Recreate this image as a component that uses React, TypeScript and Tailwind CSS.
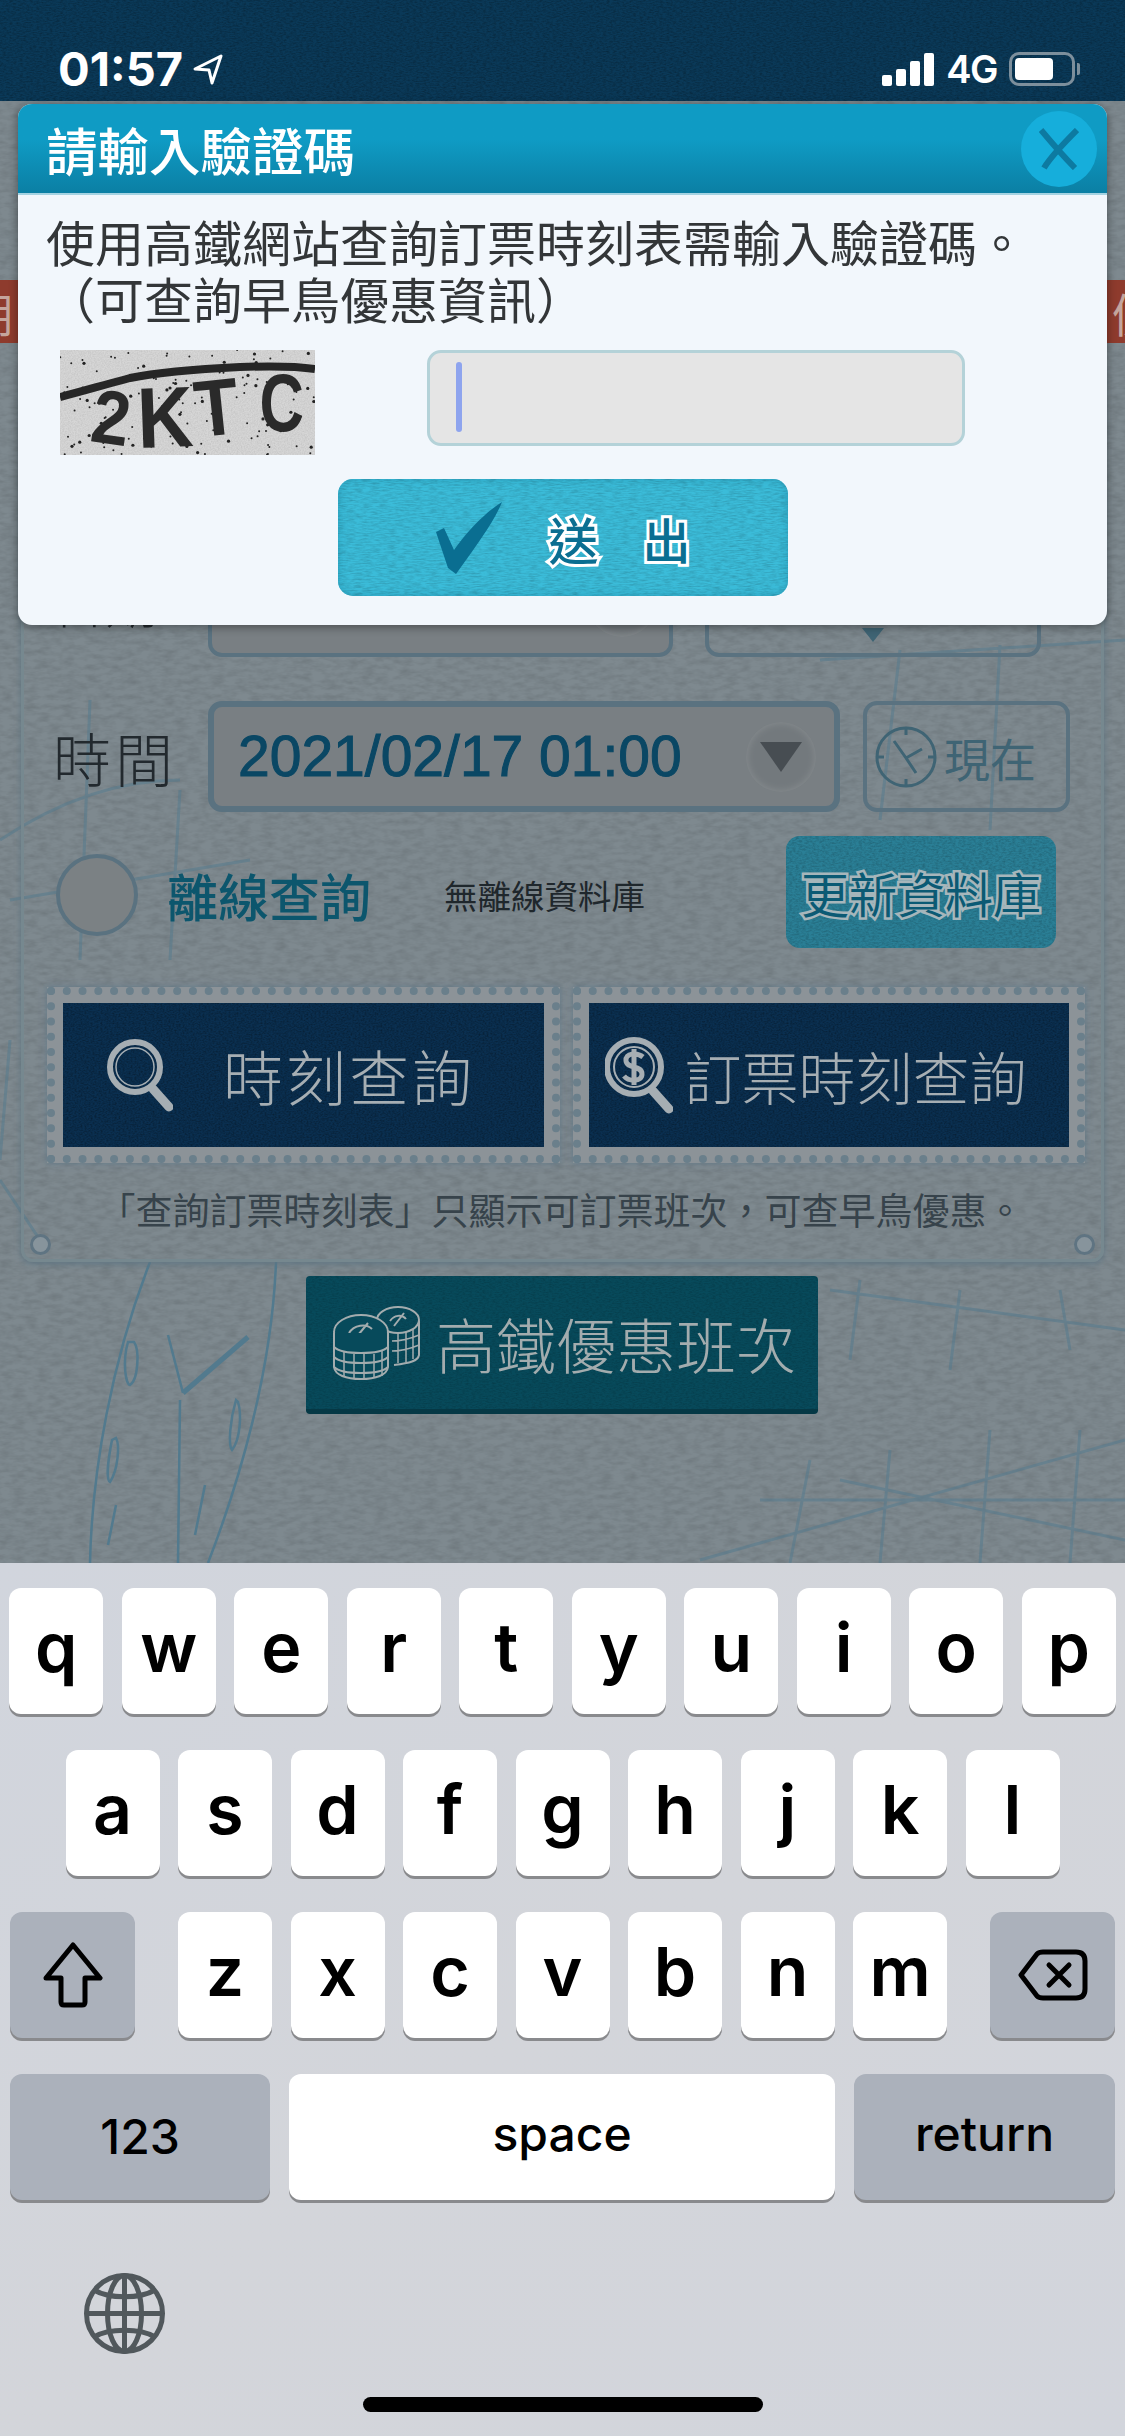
import type { ReactNode } from 'react';

const cjk = "font-['Noto_Sans_CJK_TC','Noto_Sans',sans-serif]";

// woven paper grain, tinted per surface
function Grain({ id, freq, alpha }: { id: string; freq: string; alpha: number }) {
  return (
    <svg className="absolute inset-0 w-full h-full pointer-events-none" aria-hidden="true">
      <filter id={id} x="0" y="0" width="100%" height="100%">
        <feTurbulence type="fractalNoise" baseFrequency={freq} numOctaves={3} seed={4} />
        <feColorMatrix values={`0 0 0 0 0  0 0 0 0 0  0 0 0 0 0  ${alpha} 0 0 0 ${-alpha * 0.35}`} />
      </filter>
      <rect width="100%" height="100%" filter={`url(#${id})`} />
    </svg>
  );
}

function BackgroundSketch() {
  return (
    <svg className="absolute inset-0 w-full h-full" viewBox="0 0 1125 1563" fill="none" stroke="#527a8e" aria-hidden="true">
      {/* clock */}
      <g strokeWidth="2.5">
        <path d="M90 1563C92 1470 112 1360 150 1262" />
        <path d="M208 1563C240 1480 272 1370 276 1262" />
        <path d="M183 1393L168 1335" />
        <path d="M183 1393L248 1337" strokeWidth="5" />
        <path d="M180 1400L178 1563" />
        <path d="M128 1342C122 1362 126 1385 130 1385C138 1380 140 1350 134 1342Z" />
        <path d="M112 1440C108 1460 106 1480 110 1482C118 1470 120 1445 116 1438Z" />
        <path d="M236 1400C230 1420 228 1445 232 1450C240 1440 242 1415 238 1402Z" />
        <path d="M116 1505L108 1545M205 1485L195 1535" />
      </g>
      {/* timetable scribbles */}
      <g strokeWidth="3" opacity="0.5">
        <path d="M830 1290L1125 1330M860 1280L850 1360M960 1290L950 1370M1060 1290L1070 1350" />
        <path d="M700 1560L1125 1440M790 1563L810 1460M880 1563L890 1450M980 1563L990 1430M1070 1563L1080 1430" />
        <path d="M760 1500L1125 1500M840 1480L1125 1540" />
        <path d="M0 840C60 800 120 780 180 780M10 900L250 860M90 700L80 960M180 790L170 960" />
        <path d="M820 660L1125 640M900 650L880 820M1000 645L990 830" />
        <path d="M0 1180L40 1240M10 1040L0 1160" />
      </g>
    </svg>
  );
}

function Dropdown() {
  return (
    <span className="w-[70px] h-[70px] rounded-full bg-[#73797d] shadow-[inset_0_0_8px_#8b9093] flex items-center justify-center shrink-0">
      <svg width="42" height="30" viewBox="0 0 42 30" aria-hidden="true">
        <path d="M0 0H42L21 30Z" fill="#474d52" />
      </svg>
    </span>
  );
}

function ClockIcon() {
  return (
    <svg width="64" height="64" viewBox="0 0 64 64" fill="none" stroke="#3f6474" strokeWidth="3" aria-hidden="true">
      <circle cx="32" cy="32" r="29" />
      <path d="M32 33L20 16M32 33L48 24M32 33L42 48" />
      <path d="M32 3V10M32 54V61M3 32H10M54 32H61" />
    </svg>
  );
}

function SearchIcon() {
  return (
    <svg className="translate-y-[12px]" width="66" height="116" viewBox="0 0 66 116" fill="none" stroke="#a6aeb3" aria-hidden="true">
      <circle cx="28" cy="38" r="25" strokeWidth="6" />
      <circle cx="28" cy="38" r="19" strokeWidth="1.5" />
      <path d="M46 60L62 78" strokeWidth="9" strokeLinecap="round" />
    </svg>
  );
}

function DollarSearchIcon() {
  return (
    <svg className="translate-y-[12px]" width="68" height="116" viewBox="0 0 68 116" fill="none" stroke="#a6aeb3" aria-hidden="true">
      <circle cx="29" cy="38" r="27" strokeWidth="6" />
      <circle cx="29" cy="38" r="20" strokeWidth="2" />
      <path d="M38 28C32 23 20 24 21 32C22 40 37 36 37 45C37 53 24 53 19 47M29 20V56" strokeWidth="5" />
      <path d="M48 62L64 80" strokeWidth="9" strokeLinecap="round" />
    </svg>
  );
}

function CoinsIcon() {
  return (
    <svg width="90" height="76" viewBox="0 0 90 76" fill="none" stroke="#a3acae" strokeWidth="2" aria-hidden="true">
      <ellipse cx="66" cy="15" rx="21" ry="13" />
      <path d="M58 16C62 10 70 9 74 14M62 21L72 8" />
      <path d="M87 16V50C86 56 78 58 62 60" />
      <path d="M66 28V58M74 27V57M81 24V54M60 36C70 36 80 33 87 30M60 46C70 46 80 43 87 40" strokeWidth="1.5" />
      <ellipse cx="29" cy="27" rx="27" ry="17" fill="#074a5b" />
      <path d="M17 28C22 20 34 18 40 24M22 35L36 18" />
      <path d="M2 28V62C3 70 14 74 29 74C44 74 55 70 56 62V28" fill="#074a5b" />
      <path d="M2 42C10 50 48 50 56 42M2 52C10 60 48 60 56 52M2 62C10 70 48 70 56 62" />
      <path d="M12 47V71M22 49V74M32 49V74M42 49V73M50 46V71" strokeWidth="1.5" />
    </svg>
  );
}

function Stamp({ id, icon, inset, children }: { id: string; icon: ReactNode; inset: string; children: ReactNode }) {
  return (
    <div className="flex-1 h-[176px] bg-[#8c9398] border-[8px] border-dotted border-[#6a7f8b] p-[8px] shadow-[0_0_6px_#62798a]">
      <div className={`relative overflow-hidden h-full bg-[#0a2f50] flex items-center ${inset}`}>
        <Grain id={id} freq="0.5 0.7" alpha={0.6} />
        <span className="relative shrink-0">{icon}</span>
        {children}
      </div>
    </div>
  );
}

function StatusBar() {
  return (
    <div className="relative h-[101px] bg-[#0a3958] overflow-hidden flex items-start justify-between pl-[58px] pr-[45px] pt-[46px]">
      <Grain id="top" freq="0.3 0.8" alpha={0.5} />
      <div className="relative flex items-center gap-[10px] text-white">
        <span className="font-['Inter',sans-serif] font-bold text-[47px] leading-[46px]">01:57</span>
        <svg width="30" height="31" viewBox="0 0 30 31" fill="none" stroke="#fff" strokeWidth="3" strokeLinejoin="round" aria-hidden="true">
          <path d="M2 15L28 2L19 29L16 16Z" />
        </svg>
      </div>
      <div className="relative flex items-center gap-[12px] text-white">
        <div className="flex items-end gap-[4px] h-[33px]">
          <span className="w-[10px] h-[11px] bg-white rounded-[2px]" />
          <span className="w-[10px] h-[17px] bg-white rounded-[2px]" />
          <span className="w-[10px] h-[25px] bg-white rounded-[2px]" />
          <span className="w-[10px] h-[33px] bg-white rounded-[2px]" />
        </div>
        <span className="font-['Inter',sans-serif] font-semibold text-[38px] leading-[46px] tracking-[-1.5px]">4G</span>
        <div className="flex items-center gap-[2px]">
          <div className="w-[66px] h-[34px] rounded-[10px] border-[3px] border-[#7d8f9c] p-[3px]">
            <div className="w-[38px] h-full bg-white rounded-[4px]" />
          </div>
          <span className="w-[3px] h-[12px] bg-[#7d8f9c] rounded-r-[2px]" />
        </div>
      </div>
    </div>
  );
}

function Backdrop() {
  return (
    <div className="relative h-[1563px] bg-[#7e898f] overflow-hidden">
      <Grain id="paper" freq="0.08 0.2" alpha={0.2} />
      <BackgroundSketch />
      <div className="relative">
        <StatusBar />

        <div className="mt-[179px] h-[63px] bg-[#8e3b2d] flex justify-between items-center text-[#c4a59d] text-[46px] leading-none overflow-hidden">
          <span className={`${cjk} -ml-[33px]`}>期</span>
          <span className={`${cjk} -mr-[33px]`}>優</span>
        </div>

        <div className="relative mx-[21px] mt-[20px] h-[899px] border-[3px] border-[#76888f] rounded-[12px] pt-[180px] pl-[29px] pr-[16px] shadow-[0_2px_6px_#5f7583]">
          <span className="absolute left-[6px] bottom-[4px] w-[21px] h-[21px] rounded-full border-[3px] border-[#5f7482] bg-[#87949c]" />
          <span className="absolute right-[6px] bottom-[4px] w-[21px] h-[21px] rounded-full border-[3px] border-[#5f7482] bg-[#87949c]" />

          {/* date row, mostly behind the dialog */}
          <div className="flex items-center h-[111px]">
            <span className={`${cjk} w-[155px] text-[52px] font-light text-[#22292e]`}>日期</span>
            <div className="w-[465px] h-full rounded-[14px] border-[4px] border-[#5a7280] bg-[#797f83] flex items-center justify-end pr-[12px]">
              <Dropdown />
            </div>
            <div className="ml-[32px] w-[336px] h-full rounded-[14px] border-[4px] border-[#5a7280] flex justify-center pt-[78px]">
              <svg width="22" height="14" viewBox="0 0 22 14" aria-hidden="true">
                <path d="M0 0H22L11 14Z" fill="#3f6474" />
              </svg>
            </div>
          </div>

          {/* time row */}
          <div className="flex items-center h-[111px] mt-[44px]">
            <span className={`${cjk} w-[155px] text-[58px] font-light tracking-[4px] text-[#22292e] leading-none`}>時間</span>
            <div className="w-[632px] h-full rounded-[14px] border-[6px] border-[#5a7280] bg-[#797f83] flex items-center justify-between pl-[24px] pr-[18px]">
              <span className="font-['Liberation_Sans',sans-serif] text-[57px] leading-none text-[#0a4764] [-webkit-text-stroke:1px_#0a4764]">2021/02/17 01:00</span>
              <Dropdown />
            </div>
            <div className="ml-[23px] w-[207px] h-full rounded-[14px] border-[4px] border-[#5a7280] flex items-center pl-[7px] gap-[6px]">
              <ClockIcon />
              <span className={`${cjk} text-[46px] text-[#3f6474] leading-none`}>現在</span>
            </div>
          </div>

          {/* offline row */}
          <div className="flex items-center h-[112px] mt-[27px]">
            <span className="ml-[3px] w-[82px] h-[82px] rounded-full border-[4px] border-[#5a7280] bg-[#7b8184] shrink-0" />
            <span className={`${cjk} ml-[29px] text-[51px] font-medium leading-none text-[#0c566d] whitespace-nowrap`}>離線查詢</span>
            <span className={`${cjk} ml-[73px] text-[33.5px] leading-none text-[#1f272c] whitespace-nowrap`}>無離線資料庫</span>
            <div className="relative overflow-hidden ml-[141px] -mt-[6px] w-[270px] h-full rounded-[14px] bg-[#2a7f96] flex items-center justify-center">
              <Grain id="refresh" freq="0.3 0.6" alpha={0.35} />
              <span className={`${cjk} relative text-[48px] leading-none text-[#0b5a74] [-webkit-text-stroke:5px_#a6b6bb] [paint-order:stroke] whitespace-nowrap`}>更新資料庫</span>
            </div>
          </div>

          {/* stamps */}
          <div className="flex gap-[13px] mt-[36px] ml-[-6px] mr-[0px]">
            <Stamp id="stampA" icon={<SearchIcon />} inset="pl-[44px] gap-[50px]">
              <span className={`${cjk} relative text-[60px] font-light leading-none tracking-[3px] text-[#a6aeb3] whitespace-nowrap`}>時刻查詢</span>
            </Stamp>
            <Stamp id="stampB" icon={<DollarSearchIcon />} inset="pl-[16px] gap-[12px]">
              <span className={`${cjk} relative text-[57px] font-light leading-none text-[#a6aeb3] whitespace-nowrap`}>訂票時刻查詢</span>
            </Stamp>
          </div>

          <p className={`${cjk} mt-[27px] text-center text-[37px] leading-[38px] text-[#37434b] whitespace-nowrap -ml-[16px]`}>「查詢訂票時刻表」只顯示可訂票班次，可查早鳥優惠。</p>
        </div>

        <div className="relative overflow-hidden mt-[14px] ml-[306px] w-[512px] h-[138px] bg-[#074a5b] rounded-[4px] border-b-[5px] border-[#053845] flex items-center pl-[26px] gap-[14px]">
          <Grain id="promo" freq="0.3 0.8" alpha={0.3} />
          <span className="relative shrink-0"><CoinsIcon /></span>
          <span className={`${cjk} relative text-[60px] font-light leading-none text-[#a3acae] whitespace-nowrap`}>高鐵優惠班次</span>
        </div>
      </div>
    </div>
  );
}

function CaptchaNoise() {
  const hash = (n: number) => {
    const s = Math.sin(n * 12.9898) * 43758.5453;
    return s - Math.floor(s);
  };
  const dots = Array.from({ length: 150 }, (_, i) => ({
    x: hash(i + 1) * 255,
    y: hash(i + 500) * 105,
    r: hash(i + 900) > 0.7 ? 1.6 : 1,
  }));
  return (
    <svg className="absolute inset-0 w-full h-full" viewBox="0 0 255 105" aria-hidden="true">
      <filter id="speck" x="0" y="0" width="100%" height="100%">
        <feTurbulence type="fractalNoise" baseFrequency="0.7" numOctaves={2} seed={9} />
        <feColorMatrix values="0 0 0 0 0.55  0 0 0 0 0.55  0 0 0 0 0.55  1.6 0 0 0 -0.5" />
      </filter>
      <rect width="255" height="105" filter="url(#speck)" />
      {dots.map((d, i) => (
        <circle key={i} cx={d.x} cy={d.y} r={d.r} fill="#222" />
      ))}
      <path d="M0 47C20 42 40 36 70 28C100 22 140 19 180 17C210 16 235 16 255 19" fill="none" stroke="#262626" strokeWidth="8" />
    </svg>
  );
}

function Dialog() {
  return (
    <div className="absolute left-[18px] top-[104px] w-[1089px] h-[521px] rounded-[14px] overflow-hidden bg-[#f2f7fc] shadow-[0_2px_10px_#0006]">
      <div className="h-[91px] bg-gradient-to-b from-[#0f9bc4] from-40% to-[#0b7fa4] border-b-[2px] border-[#a5d3e2] flex items-center justify-between pl-[28px] pr-[10px]">
        <h2 className={`${cjk} text-[51.5px] leading-none text-white font-medium`}>請輸入驗證碼</h2>
        <div className="w-[76px] h-[76px] rounded-full bg-[#16aedb] flex items-center justify-center">
          <svg width="40" height="42" viewBox="0 0 40 42" fill="none" stroke="#0d7aa1" strokeWidth="6" aria-hidden="true">
            <path d="M2 2C12 14 26 30 36 40" />
            <path d="M38 2C28 12 12 28 5 40" />
          </svg>
        </div>
      </div>

      <div className="pl-[28px] pt-[17px]">
        <p className={`${cjk} text-[49px] leading-[57px] text-[#333638] whitespace-nowrap`}>
          使用高鐵網站查詢訂票時刻表需輸入驗證碼。
          <br />
          （可查詢早鳥優惠資訊）
        </p>

        <div className="flex items-start mt-[24px] ml-[14px]">
          <div className="relative overflow-hidden w-[255px] h-[105px] bg-[#d6d6d6] font-['Liberation_Sans',sans-serif] font-bold text-[#2a2a2a] leading-none">
            <CaptchaNoise />
            {/* the distorted letters of the code lie on the noise */}
            <span className="absolute left-[30px] top-[30px] text-[76px] rotate-[8deg] scale-x-90">2</span>
            <span className="absolute left-[74px] top-[24px] text-[86px] -rotate-2 scale-x-90">K</span>
            <span className="absolute left-[132px] top-[18px] text-[80px] -rotate-6 scale-x-90">T</span>
            <span className="absolute left-[192px] top-[12px] text-[82px] scale-x-75">C</span>
          </div>
          <div className="ml-[112px] w-[538px] h-[96px] rounded-[14px] border-[3px] border-[#b4d2d8] bg-[#e5e5e5] pl-[26px] pt-[9px]">
            <div className="w-[6px] h-[70px] rounded-[3px] bg-[#8ea4ee]" />
          </div>
        </div>
      </div>

      <div className="flex justify-center mt-[24px]">
        <div className="relative overflow-hidden w-[450px] h-[117px] rounded-[15px] bg-[#3bbcd9] shadow-[inset_0_0_8px_#2a9fbc] flex items-center pl-[98px]">
          <Grain id="submit" freq="0.12 0.7" alpha={0.3} />
          <svg className="relative" width="68" height="72" viewBox="0 0 68 72" aria-hidden="true">
            <path d="M0 30L8 26L18 48C32 28 50 10 66 0C58 20 40 44 20 72L12 66Z" fill="#0a6e91" />
          </svg>
          <span className={`${cjk} relative ml-[45px] text-[50px] font-medium leading-none text-[#0a6e91] [-webkit-text-stroke:6px_#ffffff] [paint-order:stroke]`}>送</span>
          <span className={`${cjk} relative ml-[44px] text-[48px] font-medium leading-none text-[#0a6e91] [-webkit-text-stroke:6px_#ffffff] [paint-order:stroke]`}>出</span>
        </div>
      </div>
    </div>
  );
}

function Key({ children, wide, grey }: { children: ReactNode; wide?: string; grey?: boolean }) {
  return (
    <div
      className={`${wide ?? 'w-[94px]'} ${grey ? 'bg-[#abb1bb]' : 'bg-white'} h-[126px] rounded-[12px] shadow-[0_3px_0_#898a8d] flex items-center justify-center text-black shrink-0`}
    >
      {children}
    </div>
  );
}

function Letters({ keys }: { keys: string }) {
  return (
    <>
      {keys.split('').map((k) => (
        <Key key={k}>
          <span className="text-[68px] font-semibold leading-none -translate-y-[4px]">{k}</span>
        </Key>
      ))}
    </>
  );
}

function Keyboard() {
  return (
    <div className="h-[873px] bg-gradient-to-br from-[#d1d5dd] via-[#d3d5da] to-[#d2d5dc] font-['Inter',sans-serif] pt-[25px] relative">
      <div className="flex flex-col gap-[36px]">
        <div className="flex justify-center gap-[18.5px]">
          <Letters keys="qwertyuiop" />
        </div>
        <div className="flex justify-center gap-[18.5px]">
          <Letters keys="asdfghjkl" />
        </div>
        <div className="flex justify-between px-[10px]">
          <Key wide="w-[125px]" grey>
            <svg width="60" height="66" viewBox="0 0 60 66" fill="none" stroke="#000" strokeWidth="5" strokeLinejoin="round" aria-hidden="true">
              <path d="M30 3L57 36H42V60C42 62 41 63 39 63H21C19 63 18 62 18 60V36H3Z" />
            </svg>
          </Key>
          <div className="flex gap-[18.5px]">
            <Letters keys="zxcvbnm" />
          </div>
          <Key wide="w-[125px]" grey>
            <svg width="70" height="52" viewBox="0 0 70 52" fill="none" stroke="#000" strokeWidth="5" strokeLinejoin="round" strokeLinecap="round" aria-hidden="true">
              <path d="M3 26L19 5C21 3 22 3 25 3H58C64 3 67 6 67 12V40C67 46 64 49 58 49H25C22 49 21 49 19 47Z" />
              <path d="M31 16L51 36M51 16L31 36" />
            </svg>
          </Key>
        </div>
        <div className="flex justify-between px-[10px]">
          <Key wide="w-[260px]" grey>
            <span className="text-[48px] font-medium leading-none">123</span>
          </Key>
          <Key wide="w-[546px]">
            <span className="text-[48px] font-medium leading-none -translate-y-[3px]">space</span>
          </Key>
          <Key wide="w-[261px]" grey>
            <span className="text-[48px] font-medium leading-none -translate-y-[3px]">return</span>
          </Key>
        </div>
      </div>

      <div className="pl-[84px] mt-[73px]">
        <svg width="81" height="81" viewBox="0 0 81 81" fill="none" stroke="#51585c" strokeWidth="5" aria-hidden="true">
          <circle cx="40.5" cy="40.5" r="38" />
          <ellipse cx="40.5" cy="40.5" rx="17" ry="38" />
          <path d="M40.5 2V79M2 40.5H79" />
          <path d="M10 17C25 26 56 26 71 17M10 64C25 55 56 55 71 64" />
        </svg>
      </div>

      <div className="absolute left-[363px] top-[834px] w-[400px] h-[15px] rounded-full bg-black" />
    </div>
  );
}

export default function App() {
  return (
    <div className="relative w-[1125px] h-[2436px] overflow-hidden">
      <Backdrop />
      <Dialog />
      <Keyboard />
    </div>
  );
}
